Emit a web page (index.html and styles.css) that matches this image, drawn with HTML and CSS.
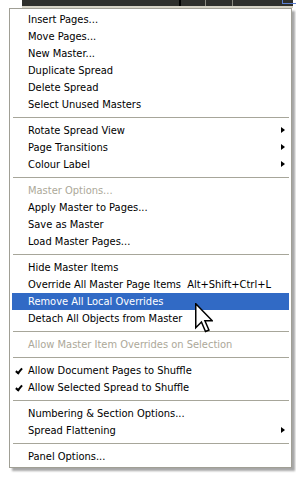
FILE: index.html
```html
<!DOCTYPE html>
<html lang="en">
<head>
    <meta charset="UTF-8">
    <meta name="viewport" content="width=device-width, initial-scale=1.0">
    <link rel="stylesheet" href="styles.css">
</head>
<body>
    <div class="page">
        <div class="topbar">
            <div class="tabs">
                <span class="tab tab-wide"></span>
                <span class="tab"></span>
                <span class="tab"></span>
            </div>
        </div>
        <span class="corner"></span> <!-- blue outline at top right -->

        <div class="menu">
            <div class="item">Insert Pages...</div>
            <div class="item">Move Pages...</div>
            <div class="item">New Master...</div>
            <div class="item">Duplicate Spread</div>
            <div class="item">Delete Spread</div>
            <div class="item">Select Unused Masters</div>
            <div class="sep"></div>
            <div class="item sub">Rotate Spread View</div>
            <div class="item sub">Page Transitions</div>
            <div class="item sub">Colour Label</div>
            <div class="sep"></div>
            <div class="item disabled">Master Options...</div>
            <div class="item">Apply Master to Pages...</div>
            <div class="item">Save as Master</div>
            <div class="item">Load Master Pages...</div>
            <div class="sep"></div>
            <div class="item">Hide Master Items</div>
            <div class="item"><span class="label">Override All Master Page Items</span><span class="keys">Alt+Shift+Ctrl+L</span></div>
            <div class="item active">Remove All Local Overrides</div>
            <div class="item">Detach All Objects from Master</div>
            <div class="sep"></div>
            <div class="item disabled">Allow Master Item Overrides on Selection</div>
            <div class="sep"></div>
            <div class="item checked">Allow Document Pages to Shuffle</div>
            <div class="item checked">Allow Selected Spread to Shuffle</div>
            <div class="sep"></div>
            <div class="item">Numbering &amp; Section Options...</div>
            <div class="item sub">Spread Flattening</div>
            <div class="sep"></div>
            <div class="item">Panel Options...</div>
        </div>

        <!-- mouse pointer over the highlighted row -->
        <svg class="cursor" width="18" height="30" viewBox="0 0 12 20">
            <path d="M0.5 0.5 L0.5 16.5 L4.3 12.7 L7 19 L9.3 18 L6.6 11.8 L11.5 11.8 Z" fill="#fff" stroke="#000" stroke-width="1" stroke-linejoin="miter"/>
        </svg>
    </div>
</body>
</html>
```

FILE: styles.css
```css
body {
    margin: 0;
    padding: 0;
    background-color: #fff;
    font-family: "DejaVu Sans Condensed", "DejaVu Sans", sans-serif;
    font-size: 11px;
    color: #000;
}
.page {
    position: relative;
    width: 296px;
    height: 480px;
    overflow: hidden;
}
/* Dark panel strip behind the menu */
.topbar {
    margin-left: 22px;
    width: 271px;
    height: 6px;
    background-color: #2e2f2c;
    border-bottom: 2px solid #d6d3c6;
}
.tabs {
    display: flex;
    height: 6px;
    padding-left: 157px;
}
.tab {
    width: 26px;
    border-left: 1px solid #8a8a80;
}
.tab-wide {
    border-left: 2px solid #000;
    width: 24px;
}
.corner {
    position: absolute;
    top: -1px;
    right: -1px;
    width: 13px;
    height: 3px;
    border: 1px solid #5b7fd0;
}
.menu {
    width: 277px;
    margin-left: 9px;
    padding: 2px;
    border: 1px solid #a09f95;
    background-color: #fff;
    box-shadow: 3px 3px 2px rgba(0, 0, 0, 0.35);
}
.item {
    display: flex;
    align-items: center;
    height: 17px;
    padding-left: 16px;
    padding-right: 18px;
    white-space: nowrap;
    position: relative;
}
.label {
    flex: 1;
}
.keys {
    margin-right: 0;
}
.disabled {
    color: #aca899;
}
.active {
    background-color: #316ac5;
    color: #fff;
}
/* Submenu arrow */
.sub::after {
    content: "";
    position: absolute;
    right: 4px;
    top: 5px;
    border-top: 3.5px solid transparent;
    border-bottom: 3.5px solid transparent;
    border-left: 4px solid #000;
}
/* Tick mark */
.checked::before {
    content: "";
    position: absolute;
    left: 5px;
    top: 5px;
    width: 2px;
    height: 5px;
    border-right: 2px solid #000;
    border-bottom: 2px solid #000;
    transform: rotate(40deg);
}
.sep {
    height: 1px;
    margin: 4px 0 4px 1px;
    background-color: #a7a69a;
}
.cursor {
    position: absolute;
    left: 195px;
    top: 303px;
}
```
